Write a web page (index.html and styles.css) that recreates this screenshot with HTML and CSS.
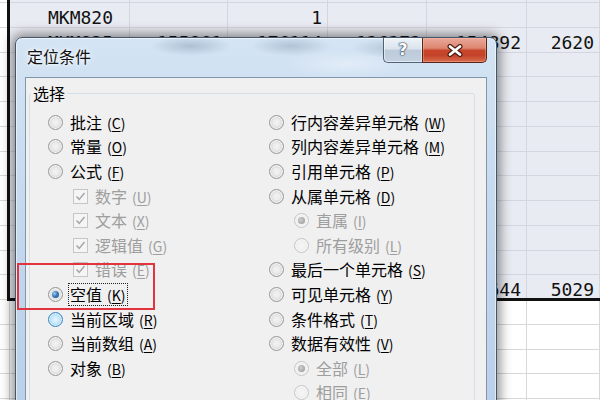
FILE: index.html
```html
<!DOCTYPE html>
<html lang="zh-CN">
<head>
<meta charset="utf-8">
<title>定位条件</title>
<link rel="stylesheet" href="styles.css">
</head>
<body>
<div class="sheet">
  <div class="row sel"><div class="c edge"></div><div class="c"></div><div class="c"></div><div class="c"></div><div class="c"></div><div class="c"></div><div class="c"></div></div>
  <div class="row sel"><div class="c edge"></div><div class="c lab">MKM820</div><div class="c"></div><div class="c">1</div><div class="c"></div><div class="c"></div><div class="c"></div></div>
  <div class="row sel"><div class="c edge"></div><div class="c lab">MKM825</div><div class="c">155861</div><div class="c">176114</div><div class="c">126373</div><div class="c">154892</div><div class="c">2620</div></div>
  <div class="row sel"><div class="c edge"></div><div class="c"></div><div class="c"></div><div class="c"></div><div class="c"></div><div class="c"></div><div class="c"></div></div>
  <div class="row sel"><div class="c edge"></div><div class="c"></div><div class="c"></div><div class="c"></div><div class="c"></div><div class="c"></div><div class="c"></div></div>
  <div class="row sel"><div class="c edge"></div><div class="c"></div><div class="c"></div><div class="c"></div><div class="c"></div><div class="c"></div><div class="c"></div></div>
  <div class="row sel"><div class="c edge"></div><div class="c"></div><div class="c"></div><div class="c"></div><div class="c"></div><div class="c"></div><div class="c"></div></div>
  <div class="row sel"><div class="c edge"></div><div class="c"></div><div class="c"></div><div class="c"></div><div class="c"></div><div class="c"></div><div class="c"></div></div>
  <div class="row sel"><div class="c edge"></div><div class="c"></div><div class="c"></div><div class="c"></div><div class="c"></div><div class="c"></div><div class="c"></div></div>
  <div class="row sel"><div class="c edge"></div><div class="c"></div><div class="c"></div><div class="c"></div><div class="c"></div><div class="c"></div><div class="c"></div></div>
  <div class="row sel"><div class="c edge"></div><div class="c"></div><div class="c"></div><div class="c"></div><div class="c"></div><div class="c"></div><div class="c"></div></div>
  <div class="row sel"><div class="c edge"></div><div class="c"></div><div class="c"></div><div class="c"></div><div class="c"></div><div class="c"></div><div class="c"></div></div>
  <div class="row sel"><div class="c edge"></div><div class="c"></div><div class="c"></div><div class="c"></div><div class="c"></div><div class="c">5644</div><div class="c">5029</div></div>
  <div class="row"><div class="c edge"></div><div class="c"></div><div class="c"></div><div class="c"></div><div class="c"></div><div class="c"></div><div class="c"></div></div>
  <div class="row"><div class="c edge"></div><div class="c"></div><div class="c"></div><div class="c"></div><div class="c"></div><div class="c"></div><div class="c"></div></div>
  <div class="row"><div class="c edge"></div><div class="c"></div><div class="c"></div><div class="c"></div><div class="c"></div><div class="c"></div><div class="c"></div></div>
  <div class="row"><div class="c edge"></div><div class="c"></div><div class="c"></div><div class="c"></div><div class="c"></div><div class="c"></div><div class="c"></div></div>
  <div class="row"><div class="c edge"></div><div class="c"></div><div class="c"></div><div class="c"></div><div class="c"></div><div class="c"></div><div class="c"></div></div>
</div>
<div class="selbox"></div>

<div class="dialog">
  <div class="titlebar">
    <div class="title">定位条件</div>
    <div class="capbtns">
      <div class="help"><span>?</span></div>
      <div class="close">
        <svg width="18" height="13" viewBox="0 0 18 13">
          <path d="M4 2.5 L14 10.5 M14 2.5 L4 10.5" stroke="#4a1c12" stroke-width="5" stroke-linecap="round" fill="none"/>
          <path d="M4 2.5 L14 10.5 M14 2.5 L4 10.5" stroke="#ffffff" stroke-width="2.8" stroke-linecap="round" fill="none"/>
        </svg>
      </div>
    </div>
  </div>
  <div class="client">
    <fieldset class="group">
      <legend>选择</legend>
      <div class="cols">
        <div class="col col-left">
          <div class="item"><span class="radio"></span><span class="txt">批注<span class="mn">(<u>C</u>)</span></span></div>
          <div class="item"><span class="radio"></span><span class="txt">常量<span class="mn">(<u>O</u>)</span></span></div>
          <div class="item"><span class="radio"></span><span class="txt">公式<span class="mn">(<u>F</u>)</span></span></div>
          <div class="item sub dis"><span class="check"><svg width="13" height="13" viewBox="0 0 13 13"><path d="M2.5 6.5 L5.2 9.4 L10.5 3" stroke="#a9a9a9" stroke-width="1.6" fill="none"/></svg></span><span class="txt">数字<span class="mn">(<u>U</u>)</span></span></div>
          <div class="item sub dis"><span class="check"><svg width="13" height="13" viewBox="0 0 13 13"><path d="M2.5 6.5 L5.2 9.4 L10.5 3" stroke="#a9a9a9" stroke-width="1.6" fill="none"/></svg></span><span class="txt">文本<span class="mn">(<u>X</u>)</span></span></div>
          <div class="item sub dis"><span class="check"><svg width="13" height="13" viewBox="0 0 13 13"><path d="M2.5 6.5 L5.2 9.4 L10.5 3" stroke="#a9a9a9" stroke-width="1.6" fill="none"/></svg></span><span class="txt">逻辑值<span class="mn">(<u>G</u>)</span></span></div>
          <div class="item sub dis"><span class="check"><svg width="13" height="13" viewBox="0 0 13 13"><path d="M2.5 6.5 L5.2 9.4 L10.5 3" stroke="#a9a9a9" stroke-width="1.6" fill="none"/></svg></span><span class="txt">错误<span class="mn">(<u>E</u>)</span></span></div>
          <div class="item"><span class="radio on"></span><span class="txt focus">空值<span class="mn">(<u>K</u>)</span></span></div>
          <div class="item"><span class="radio hover"></span><span class="txt">当前区域<span class="mn">(<u>R</u>)</span></span></div>
          <div class="item"><span class="radio"></span><span class="txt">当前数组<span class="mn">(<u>A</u>)</span></span></div>
          <div class="item"><span class="radio"></span><span class="txt">对象<span class="mn">(<u>B</u>)</span></span></div>
        </div>
        <div class="col col-right">
          <div class="item"><span class="radio"></span><span class="txt">行内容差异单元格<span class="mn">(<u>W</u>)</span></span></div>
          <div class="item"><span class="radio"></span><span class="txt">列内容差异单元格<span class="mn">(<u>M</u>)</span></span></div>
          <div class="item"><span class="radio"></span><span class="txt">引用单元格<span class="mn">(<u>P</u>)</span></span></div>
          <div class="item"><span class="radio"></span><span class="txt">从属单元格<span class="mn">(<u>D</u>)</span></span></div>
          <div class="item sub dis"><span class="radio on"></span><span class="txt">直属<span class="mn">(<u>I</u>)</span></span></div>
          <div class="item sub dis"><span class="radio"></span><span class="txt">所有级别<span class="mn">(<u>L</u>)</span></span></div>
          <div class="item"><span class="radio"></span><span class="txt">最后一个单元格<span class="mn">(<u>S</u>)</span></span></div>
          <div class="item"><span class="radio"></span><span class="txt">可见单元格<span class="mn">(<u>Y</u>)</span></span></div>
          <div class="item"><span class="radio"></span><span class="txt">条件格式<span class="mn">(<u>T</u>)</span></span></div>
          <div class="item"><span class="radio"></span><span class="txt">数据有效性<span class="mn">(<u>V</u>)</span></span></div>
          <div class="item sub dis"><span class="radio on"></span><span class="txt">全部<span class="mn">(<u>L</u>)</span></span></div>
          <div class="item sub dis"><span class="radio"></span><span class="txt">相同<span class="mn">(<u>E</u>)</span></span></div>
        </div>
      </div>
    </fieldset>
  </div>
</div>

<div class="mark"></div>
</body>
</html>
```

FILE: styles.css
```css
* { box-sizing: border-box; }
html, body { margin: 0; padding: 0; }
body {
  width: 600px;
  height: 400px;
  overflow: hidden;
  position: relative;
  background: #ffffff;
  font-family: "Noto Sans CJK SC", sans-serif;
}

/* ---------- spreadsheet background ---------- */
.sheet {
  margin-top: -21.75px;
  display: flex;
  flex-direction: column;
}
.row {
  display: grid;
  grid-template-columns: 10px 120px 98px 100px 99px 100px 73px;
  height: 24.75px;
}
.c {
  border-right: 1px solid #d8d8d8;
  border-bottom: 1px solid #d8d8d8;
  font-family: "DejaVu Sans Mono", monospace;
  font-size: 18px;
  line-height: 18px;
  color: #111;
  display: flex;
  align-items: flex-end;
  justify-content: flex-end;
  padding: 0 5px 0 0;
  white-space: nowrap;
  overflow: hidden;
}
.c.lab { justify-content: flex-start; padding-left: 38px; }
.sel .c { background: #e9ebf2; border-color: #d3d6df; }
.sel .c.edge { background: #ffffff; border-color: #d8d8d8; }
.selbox {
  position: absolute;
  left: 7px;
  top: -3px;
  width: 600px;
  height: 304px;
  border-left: 3px solid #111;
  border-bottom: 3px solid #111;
}

/* ---------- dialog ---------- */
.dialog {
  position: absolute;
  left: 15px;
  top: 37px;
  width: 482px;
  height: 380px;
  border: 1px solid #46566a;
  border-radius: 7px 7px 0 0;
  padding: 0 9px;
  display: flex;
  flex-direction: column;
  box-shadow: 0 0 12px 3px rgba(0, 0, 0, 0.45), inset 0 0 0 1px rgba(255,255,255,0.55);
  background:
    radial-gradient(ellipse 40px 10px at 175px 8px, rgba(80,100,130,0.28), transparent),
    radial-gradient(ellipse 40px 10px at 275px 8px, rgba(80,100,130,0.25), transparent),
    radial-gradient(ellipse 40px 10px at 375px 10px, rgba(80,100,130,0.22), transparent),
    radial-gradient(ellipse 60px 14px at 330px 26px, rgba(255,255,255,0.35), transparent),
    linear-gradient(180deg, #d4e4f4 0%, #c5d9ee 45%, #b9d0e9 100%);
}
.titlebar {
  height: 39px;
  display: flex;
  align-items: flex-start;
  flex: none;
}
.title {
  margin-top: 8px;
  padding-left: 2px;
  font-size: 16px;
  line-height: 20px;
  color: #111;
  text-shadow: 0 0 6px #ffffff, 0 0 3px #ffffff;
}
.capbtns {
  margin-left: auto;
  display: flex;
}
.help, .close {
  height: 25px;
  display: flex;
  align-items: center;
  justify-content: center;
}
.help {
  width: 39px;
  border: 1px solid #516275;
  border-top: none;
  border-right: none;
  border-radius: 0 0 0 5px;
  background: linear-gradient(180deg, #eef3f8 0%, #dbe4ee 45%, #bccada 52%, #c3d1e0 100%);
  box-shadow: inset 0 0 0 1px rgba(255,255,255,0.5);
}
.help span {
  color: #ffffff;
  font-family: "DejaVu Sans", sans-serif;
  font-weight: bold;
  font-size: 16px;
  line-height: 16px;
  text-shadow: 0 0 1px #2a3a4c, 0 0 1px #2a3a4c, 0 0 2px #2a3a4c;
}
.close {
  width: 65px;
  border: 1px solid #5a2519;
  border-top: none;
  border-radius: 0 0 5px 0;
  background: linear-gradient(180deg, #eaa999 0%, #dd8671 42%, #c8452b 52%, #c3432a 72%, #d96c4f 100%);
  box-shadow: inset 0 0 0 1px rgba(255,200,180,0.35);
}

.client {
  flex: 1;
  border: 1px solid #8296ab;
  background: #f0f0f0;
  padding: 5px 11px 0 3px;
}
.group {
  margin: 0;
  padding: 7px 0 0 0;
  border: 1px solid #d5dfe5;
  border-radius: 3px;
  height: 330px;
  min-width: 0;
}
.group legend {
  margin-left: 1px;
  padding: 0 2px;
  font-size: 16px;
  line-height: 20px;
  color: #000;
}
.cols { display: flex; }
.col-left { width: 239px; padding-left: 18px; }
.col-right { flex: 1; }
.item {
  height: 24.6px;
  display: flex;
  align-items: center;
}
.item.sub { padding-left: 25px; }
.txt {
  font-size: 16px;
  line-height: 18px;
  color: #000;
  white-space: nowrap;
}
.dis .txt { color: #9e9e9e; }
.mn { font-size: 14px; margin-left: 5px; }
.mn u { text-underline-offset: 2px; }
.focus {
  outline: 1px dotted #222;
  outline-offset: 1px;
}

.radio {
  width: 15px;
  height: 15px;
  flex: none;
  margin-right: 7px;
  border-radius: 50%;
  border: 1px solid #979797;
  background: radial-gradient(circle at 50% 50%, #f2f2f2 0, #ececec 35%, #d4d4d4 70%, #c4c4c4 100%);
  box-shadow: inset 0 0 0 1px #f8f8f8;
  position: relative;
}
.radio.on::after {
  content: "";
  position: absolute;
  left: 3px;
  top: 3px;
  width: 7px;
  height: 7px;
  border-radius: 50%;
  background: radial-gradient(circle at 35% 35%, #9ed0f2 0, #3a7bbd 45%, #174b86 100%);
}
.radio.hover {
  border-color: #3d84c0;
  background: radial-gradient(circle at 50% 50%, #e8f6fd 0, #c9e9fa 40%, #9fd5f4 75%, #7cc3ec 100%);
  box-shadow: inset 0 0 0 1px #def2fc;
}
.dis .radio {
  border-color: #c6c6c6;
  background: radial-gradient(circle at 50% 50%, #f6f6f6 0, #f0f0f0 50%, #e6e6e6 100%);
}
.dis .radio.on::after {
  background: radial-gradient(circle at 40% 40%, #d0d0d0 0, #ababab 60%, #9a9a9a 100%);
}
.check {
  width: 15px;
  height: 15px;
  flex: none;
  margin-right: 7px;
  border: 1px solid #c6c6c6;
  background: #f5f5f5;
  display: flex;
  align-items: center;
  justify-content: center;
}
.check svg { display: block; }

/* annotation rectangle over the screenshot */
.mark {
  position: absolute;
  left: 17px;
  top: 263px;
  width: 138px;
  height: 47px;
  border: 2px solid #e2343e;
}
```
